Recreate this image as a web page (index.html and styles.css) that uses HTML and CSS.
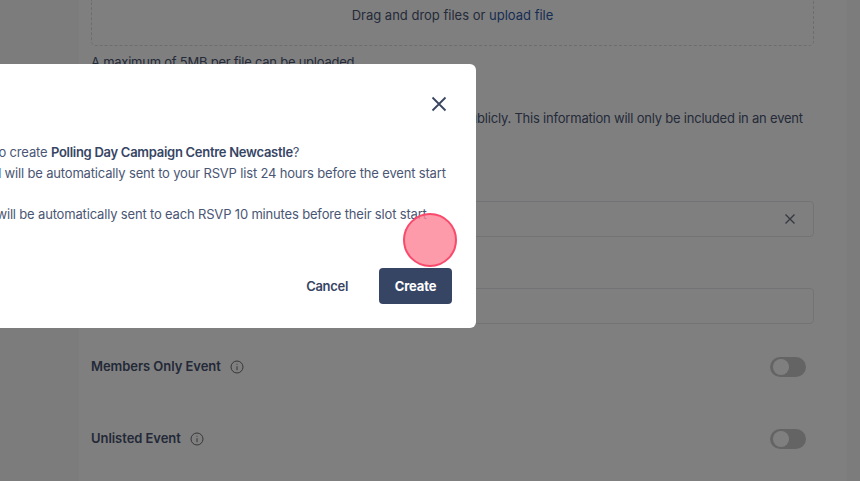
FILE: index.html
```html
<!DOCTYPE html>
<html lang="en">
<head>
<meta charset="utf-8">
<title>Create event</title>
<link rel="stylesheet" href="styles.css">
</head>
<body>
<div class="page">
  <main class="card">
    <div class="dropzone">Drag and drop files or <a class="link">upload file</a></div>
    <p class="note">A maximum of 5MB per file can be uploaded</p>
    <p class="para">Contact details for the organiser of an event will not be shown publicly. This information will only be included in an event</p>
    <div class="field field-first"><svg class="clear" viewBox="0 0 12 12"><path d="M1.5 1.5l9 9M10.5 1.5l-9 9"/></svg></div>
    <div class="field field-second"></div>
    <div class="row row-first">
      <span class="label">Members Only Event</span>
      <svg class="info" viewBox="0 0 14 14"><circle cx="7" cy="7" r="6"/><path d="M7 6.2v4M7 3.8v.9"/></svg>
      <span class="toggle"><span class="knob"></span></span>
    </div>
    <div class="row">
      <span class="label">Unlisted Event</span>
      <svg class="info" viewBox="0 0 14 14"><circle cx="7" cy="7" r="6"/><path d="M7 6.2v4M7 3.8v.9"/></svg>
      <span class="toggle"><span class="knob"></span></span>
    </div>
  </main>
</div>
<div class="overlay"></div>
<section class="modal">
  <svg class="close" viewBox="0 0 16 16"><path d="M1.5 1.5l13 13M14.5 1.5l-13 13"/></svg>
  <div class="modal-body">
    <p>Are you sure you want to create <b>Polling Day Campaign Centre Newcastle</b>?</p>
    <p>The final reminder email will be automatically sent to your RSVP list 24 hours before the event start</p>
    <p>time.</p>
    <p>The last reminder SMS will be automatically sent to each RSVP 10 minutes before their slot start</p>
  </div>
  <div class="actions">
    <button class="btn btn-ghost">Cancel</button>
    <button class="btn btn-primary">Create</button>
  </div>
</section>
<div class="pointer"></div>
</body>
</html>
```
FILE: styles.css
```css
* { box-sizing: border-box; }
html, body { margin: 0; height: 481px; overflow: hidden; }
body { background: #f8f9fb; font-family: Inter, "Liberation Sans", sans-serif; font-size: 13px; color: #4a5674; }
.page { padding-left: 79px; padding-right: 13px; height: 481px; }
.card { background: #fff; height: 481px; padding: 0 33px 0 12px; }
.dropzone { height: 46px; border: 1px dashed #d8dade; border-top: 0; border-radius: 0 0 5px 5px; text-align: center; padding-top: 7px; line-height: 16px; }
.link { color: #2f5aa8; }
.note { margin: 8px 0 0; line-height: 16px; letter-spacing: -.24px; }
.para { margin: 40px 0 0; line-height: 16px; white-space: nowrap; letter-spacing: -.21px; }
.field { border: 1px solid #e6e7ea; border-radius: 4px; height: 36px; display: flex; align-items: center; justify-content: flex-end; padding-right: 17px; }
.field-first { margin-top: 75px; }
.field-second { margin-top: 51px; }
.clear { width: 12px; height: 12px; fill: none; stroke: #6d7280; stroke-width: 1.4; }
.row { display: flex; align-items: center; height: 20px; font-weight: 600; margin-top: 52px; }
.row-first { margin-top: 33px; }
.label { color: #465270; padding-bottom: 2px; letter-spacing: -.05px; }
.info { width: 14px; height: 14px; margin-left: 9px; fill: none; stroke: #6d6d6d; stroke-width: 1; }
.toggle { margin-left: auto; margin-right: 8px; width: 36px; height: 20px; border-radius: 10px; background: #c8c8c8; padding: 2px 3px; }
.knob { display: block; width: 16px; height: 16px; border-radius: 50%; background: #fff; }
.overlay { position: absolute; inset: 0; background: rgba(0,0,0,.5); }
.modal { position: absolute; left: -167px; top: 64px; width: 643px; height: 264px; background: #fff; border-radius: 6px; color: #4a5674; }
.close { position: absolute; top: 32px; right: 29px; width: 16px; height: 16px; fill: none; stroke: #3a4660; stroke-width: 1.8; }
.modal-body { position: absolute; top: 78px; left: 24px; white-space: nowrap; letter-spacing: -.17px; }
.modal-body p { margin: 0; line-height: 20.5px; }
.modal-body b { font-weight: 600; color: #374564; letter-spacing: -.28px; }
.actions { position: absolute; right: 24px; bottom: 24px; display: flex; gap: 31px; align-items: center; }
.btn { border: 0; font: 600 13px Inter, "Liberation Sans", sans-serif; border-radius: 4px; height: 36px; }
.btn-ghost { background: none; color: #374564; padding: 0; letter-spacing: -.3px; }
.btn-primary { background: #374564; color: #fff; width: 73px; font-weight: 700; letter-spacing: -.15px; }
.pointer { position: absolute; left: 403px; top: 213px; width: 54px; height: 54px; border-radius: 50%; background: rgba(252,130,150,.8); border: 2px solid #f94a6c; }
```
